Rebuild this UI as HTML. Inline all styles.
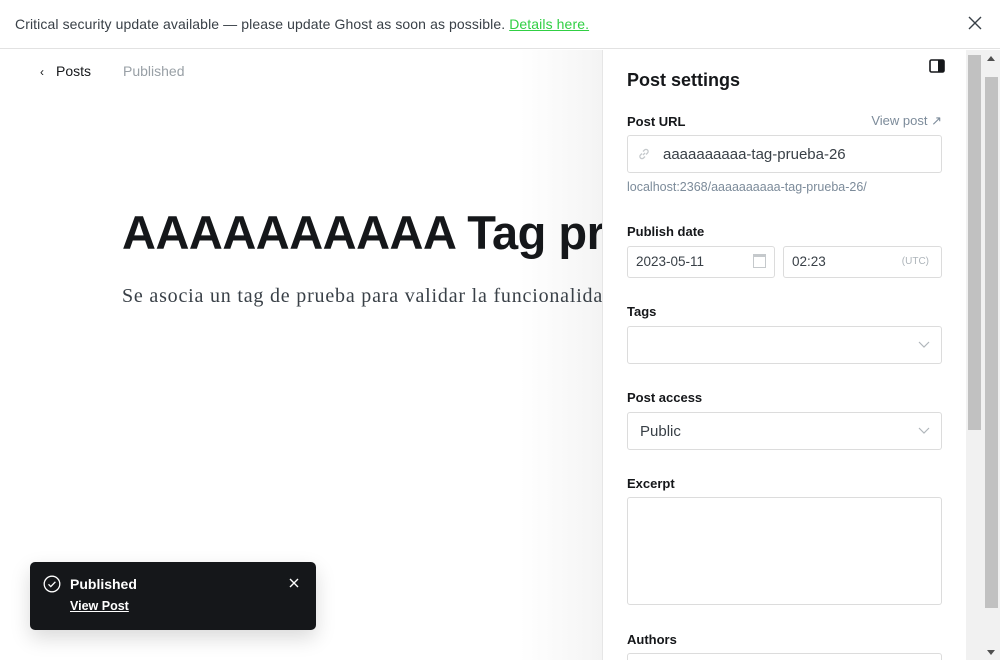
<!DOCTYPE html>
<html><head><meta charset="utf-8"><style>
*{box-sizing:border-box;margin:0;padding:0}
body{width:1000px;height:660px;overflow:hidden;background:#fff;font-family:"Liberation Sans",sans-serif;position:relative;color:#15171a}
.banner{position:absolute;left:0;top:0;width:1000px;height:49px;border-bottom:1px solid #e2e2e2;font-size:14px;color:#394047;padding:16px 0 0 15px;letter-spacing:0.1px}
.banner a{color:#30cf43;text-decoration:underline}
.close{position:absolute;right:18px;top:16px}
.editor{position:absolute;left:0;top:50px;width:602px;height:610px;background:linear-gradient(90deg,#fff 0,#fff 520px,#f4f4f4 602px)}
.nav{position:absolute;top:63px;left:40px;font-size:14px}
h1{position:absolute;left:122px;top:205px;font-size:47px;font-weight:bold;white-space:nowrap;letter-spacing:-0.5px;color:#15171a}
.sub{position:absolute;left:122px;top:285px;font-family:"Liberation Serif",serif;font-size:20px;letter-spacing:0.8px;color:#394047;white-space:nowrap}
.panel{position:absolute;left:602px;top:50px;width:364px;height:610px;background:#fff;border-left:1px solid #e6e6e6;overflow:hidden}
.lbl{position:absolute;left:24px;font-size:13px;font-weight:bold;color:#15171a}
.inp{position:absolute;left:24px;width:315px;border:1px solid #dcdcdc;border-radius:3px;background:#fff;font-size:15px;color:#394047}
.sb1{position:absolute;left:966px;top:50px;width:17px;height:610px;background:#f1f1f1}
.sb1 div{position:absolute;left:2px;top:5px;width:13px;height:375px;background:#c1c1c1}
.sb2{position:absolute;left:983px;top:50px;width:17px;height:610px;background:#f1f1f1}
.sb2 div{position:absolute;left:2px;top:27px;width:13px;height:531px;background:#c1c1c1}
.toast{position:absolute;left:30px;top:562px;width:286px;height:68px;background:#15171a;border-radius:5px;box-shadow:0 8px 20px rgba(0,0,0,.15);color:#fff}
</style></head><body>
<div class="banner">Critical security update available — please update Ghost as soon as possible. <a>Details here.</a>
<svg class="close" width="14" height="14" viewBox="0 0 14 14"><path d="M1 1L13 13M13 1L1 13" stroke="#394047" stroke-width="1.4"/></svg></div>
<div class="editor"></div>
<div class="nav"><span style="font-size:12px;margin-right:12px">&#8249;</span><span style="color:#15171a">Posts</span><span style="color:#99a0a6;margin-left:32px">Published</span></div>
<h1>AAAAAAAAAA Tag pr</h1>
<div class="sub">Se asocia un tag de prueba para validar la funcionalida</div>
<div class="panel">
<div style="position:absolute;left:24px;top:20px;font-size:18px;font-weight:bold;color:#15171a">Post settings</div>
<svg style="position:absolute;left:326px;top:9px" width="16" height="14" viewBox="0 0 16 14"><rect x="1" y="1" width="14" height="12" rx="1.5" fill="none" stroke="#15171a" stroke-width="1.6"/><rect x="9" y="1" width="6" height="12" fill="#15171a"/></svg>
<div class="lbl" style="top:64px">Post URL</div>
<div style="position:absolute;right:24px;top:63px;font-size:13px;color:#7c8b9a">View post &#8599;</div>
<div class="inp" style="top:85px;height:38px;padding:10px 0 0 35px">aaaaaaaaaa-tag-prueba-26</div>
<svg style="position:absolute;left:34px;top:97px" width="14" height="14" viewBox="0 0 14 14"><path d="M6 8l2-2M5 6.5L3.5 8a2 2 0 003 3L8 9.5M9 7.5l1.5-1.5a2 2 0 00-3-3L6 4.5" fill="none" stroke="#c5c9cc" stroke-width="1.3"/></svg>
<div style="position:absolute;left:24px;top:130px;font-size:12.5px;color:#7c8b9a">localhost:2368/aaaaaaaaaa-tag-prueba-26/</div>
<div class="lbl" style="top:174px">Publish date</div>
<div class="inp" style="top:196px;width:148px;height:32px;padding:7px 0 0 8px;font-size:13.5px">2023-05-11<span style="position:absolute;right:8px;top:7px;width:13px;height:14px;border:1px solid #c5c9cc;border-top:3px solid #c5c9cc"></span></div>
<div class="inp" style="top:196px;left:180px;width:159px;height:32px;padding:7px 0 0 8px;font-size:13.5px">02:23<span style="position:absolute;right:12px;top:9px;font-size:10px;color:#adb4ba">(UTC)</span></div>
<div class="lbl" style="top:254px">Tags</div>
<div class="inp" style="top:276px;height:38px"><svg style="position:absolute;right:11px;top:14px" width="12" height="8" viewBox="0 0 12 8"><path d="M1 1l5 5 5-5" fill="none" stroke="#b0b6bb" stroke-width="1.2"/></svg></div>
<div class="lbl" style="top:340px">Post access</div>
<div class="inp" style="top:362px;height:38px;padding:10px 0 0 12px">Public<svg style="position:absolute;right:11px;top:14px" width="12" height="8" viewBox="0 0 12 8"><path d="M1 1l5 5 5-5" fill="none" stroke="#b0b6bb" stroke-width="1.2"/></svg></div>
<div class="lbl" style="top:426px">Excerpt</div>
<div class="inp" style="top:447px;height:108px"></div>
<div class="lbl" style="top:582px">Authors</div>
<div class="inp" style="top:603px;height:38px"></div>
</div>
<div class="sb1"><div></div></div>
<div class="sb2"><div></div><span style="position:absolute;left:4px;top:6px;border:4px solid transparent;border-bottom:5px solid #505050;border-top:0"></span><span style="position:absolute;left:4px;top:600px;border:4px solid transparent;border-top:5px solid #505050;border-bottom:0"></span></div>
<div class="toast">
<svg style="position:absolute;left:13px;top:13px" width="18" height="18" viewBox="0 0 18 18"><circle cx="9" cy="9" r="7.8" fill="none" stroke="#fff" stroke-width="1.3"/><path d="M5.5 9.3l2.3 2.3 4.6-4.8" fill="none" stroke="#fff" stroke-width="1.3"/></svg>
<div style="position:absolute;left:40px;top:14px;font-size:14px;font-weight:bold">Published</div>
<div style="position:absolute;left:40px;top:37px;font-size:12.5px;font-weight:bold;text-decoration:underline">View Post</div>
<svg style="position:absolute;left:259px;top:16px" width="10" height="10" viewBox="0 0 10 10"><path d="M1 1l8 8M9 1L1 9" stroke="#fff" stroke-width="1.4"/></svg>
</div>
</body></html>
